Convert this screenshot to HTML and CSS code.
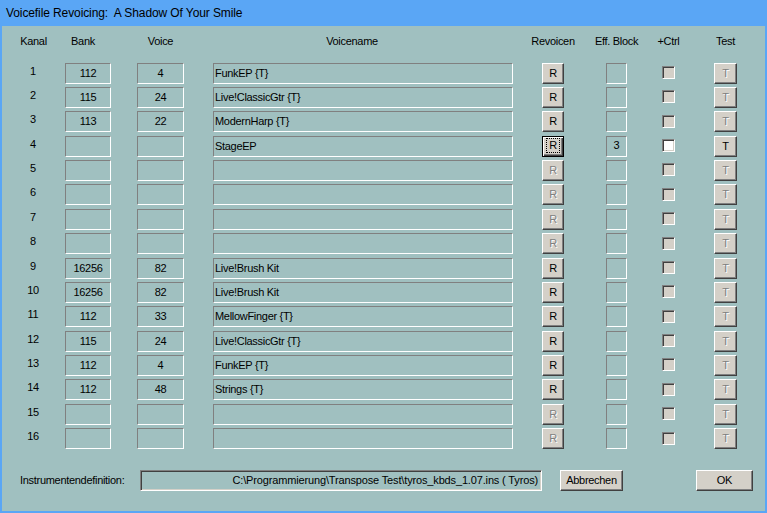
FILE: index.html
```html
<!DOCTYPE html>
<html lang="de">
<head>
<meta charset="utf-8">
<title>Voicefile Revoicing</title>
<link rel="stylesheet" href="styles.css">
</head>
<body>
<div class="window">
  <div class="titlebar">Voicefile Revoicing:&nbsp; A Shadow Of Your Smile</div>
  <div class="client">
    <div class="row head">
      <div class="h c-kanal">Kanal</div>
      <div class="h c-bank shift-bank">Bank</div>
      <div class="h c-voice">Voice</div>
      <div class="h c-name shift-name">Voicename</div>
      <div class="h c-rev">Revoicen</div>
      <div class="h c-eff">Eff. Block</div>
      <div class="h c-ctrl">+Ctrl</div>
      <div class="h c-test">Test</div>
    </div>
    <div class="rows">
      <div class="row"><div class="kanal c-kanal">1</div><div class="field num c-bank">112</div><div class="field num c-voice">4</div><div class="field name c-name">FunkEP {T}</div><div class="btn c-rev">R</div><div class="field eff c-eff"></div><div class="chk c-ctrl"></div><div class="btn dis c-test">T</div></div>
      <div class="row"><div class="kanal c-kanal">2</div><div class="field num c-bank">115</div><div class="field num c-voice">24</div><div class="field name c-name">Live!ClassicGtr {T}</div><div class="btn c-rev">R</div><div class="field eff c-eff"></div><div class="chk c-ctrl"></div><div class="btn dis c-test">T</div></div>
      <div class="row"><div class="kanal c-kanal">3</div><div class="field num c-bank">113</div><div class="field num c-voice">22</div><div class="field name c-name">ModernHarp {T}</div><div class="btn c-rev">R</div><div class="field eff c-eff"></div><div class="chk c-ctrl"></div><div class="btn dis c-test">T</div></div>
      <div class="row"><div class="kanal c-kanal">4</div><div class="field num c-bank"></div><div class="field num c-voice"></div><div class="field name c-name">StageEP</div><div class="btn def c-rev"><span class="focus">R</span></div><div class="field eff c-eff">3</div><div class="chk on c-ctrl"></div><div class="btn c-test">T</div></div>
      <div class="row"><div class="kanal c-kanal">5</div><div class="field num c-bank"></div><div class="field num c-voice"></div><div class="field name c-name"></div><div class="btn dis c-rev">R</div><div class="field eff c-eff"></div><div class="chk c-ctrl"></div><div class="btn dis c-test">T</div></div>
      <div class="row"><div class="kanal c-kanal">6</div><div class="field num c-bank"></div><div class="field num c-voice"></div><div class="field name c-name"></div><div class="btn dis c-rev">R</div><div class="field eff c-eff"></div><div class="chk c-ctrl"></div><div class="btn dis c-test">T</div></div>
      <div class="row"><div class="kanal c-kanal">7</div><div class="field num c-bank"></div><div class="field num c-voice"></div><div class="field name c-name"></div><div class="btn dis c-rev">R</div><div class="field eff c-eff"></div><div class="chk c-ctrl"></div><div class="btn dis c-test">T</div></div>
      <div class="row"><div class="kanal c-kanal">8</div><div class="field num c-bank"></div><div class="field num c-voice"></div><div class="field name c-name"></div><div class="btn dis c-rev">R</div><div class="field eff c-eff"></div><div class="chk c-ctrl"></div><div class="btn dis c-test">T</div></div>
      <div class="row"><div class="kanal c-kanal">9</div><div class="field num c-bank">16256</div><div class="field num c-voice">82</div><div class="field name c-name">Live!Brush Kit</div><div class="btn c-rev">R</div><div class="field eff c-eff"></div><div class="chk c-ctrl"></div><div class="btn dis c-test">T</div></div>
      <div class="row"><div class="kanal c-kanal">10</div><div class="field num c-bank">16256</div><div class="field num c-voice">82</div><div class="field name c-name">Live!Brush Kit</div><div class="btn c-rev">R</div><div class="field eff c-eff"></div><div class="chk c-ctrl"></div><div class="btn dis c-test">T</div></div>
      <div class="row"><div class="kanal c-kanal">11</div><div class="field num c-bank">112</div><div class="field num c-voice">33</div><div class="field name c-name">MellowFinger {T}</div><div class="btn c-rev">R</div><div class="field eff c-eff"></div><div class="chk c-ctrl"></div><div class="btn dis c-test">T</div></div>
      <div class="row"><div class="kanal c-kanal">12</div><div class="field num c-bank">115</div><div class="field num c-voice">24</div><div class="field name c-name">Live!ClassicGtr {T}</div><div class="btn c-rev">R</div><div class="field eff c-eff"></div><div class="chk c-ctrl"></div><div class="btn dis c-test">T</div></div>
      <div class="row"><div class="kanal c-kanal">13</div><div class="field num c-bank">112</div><div class="field num c-voice">4</div><div class="field name c-name">FunkEP {T}</div><div class="btn c-rev">R</div><div class="field eff c-eff"></div><div class="chk c-ctrl"></div><div class="btn dis c-test">T</div></div>
      <div class="row"><div class="kanal c-kanal">14</div><div class="field num c-bank">112</div><div class="field num c-voice">48</div><div class="field name c-name">Strings {T}</div><div class="btn c-rev">R</div><div class="field eff c-eff"></div><div class="chk c-ctrl"></div><div class="btn dis c-test">T</div></div>
      <div class="row"><div class="kanal c-kanal">15</div><div class="field num c-bank"></div><div class="field num c-voice"></div><div class="field name c-name"></div><div class="btn dis c-rev">R</div><div class="field eff c-eff"></div><div class="chk c-ctrl"></div><div class="btn dis c-test">T</div></div>
      <div class="row"><div class="kanal c-kanal">16</div><div class="field num c-bank"></div><div class="field num c-voice"></div><div class="field name c-name"></div><div class="btn dis c-rev">R</div><div class="field eff c-eff"></div><div class="chk c-ctrl"></div><div class="btn dis c-test">T</div></div>
    </div>
    <div class="footer">
      <div class="label">Instrumentendefinition:</div>
      <div class="path">C:\Programmierung\Transpose Test\tyros_kbds_1.07.ins ( Tyros)</div>
      <div class="btn wide cancel">Abbrechen</div>
      <div class="btn wide ok">OK</div>
    </div>
  </div>
</div>
</body>
</html>
```
FILE: styles.css
```css
html, body {
  margin: 0;
  padding: 0;
  background: #a0c0c0;
}

body {
  font-family: "Liberation Sans", Arial, sans-serif;
  font-size: 11px;
  letter-spacing: -0.3px;
  color: #000;
}

.window {
  width: 767px;
  height: 513px;
  display: flex;
  flex-direction: column;
  box-sizing: border-box;
}

.titlebar {
  height: 26px;
  line-height: 26px;
  padding-left: 6px;
  background: #5aa6f5;
  font-size: 12px;
  letter-spacing: -0.1px;
  white-space: nowrap;
  flex: none;
}

.client {
  flex: 1;
  background: #a0c0c0;
  border-left: 2px solid #5aa6f5;
  border-right: 2px solid #5aa6f5;
  border-bottom: 2px solid #5aa6f5;
  padding-top: 9px;
  box-sizing: border-box;
}

.row {
  display: grid;
  grid-template-columns: 63px 46px 26px 47px 29px 300px 29px 22px 42px 21px 35px 13px 39px 23px;
  height: 24.375px;
  align-items: start;
}

.row.head {
  height: 13px;
}

.rows {
  margin-top: 14.6px;
}

.c-kanal { grid-column: 1; }
.c-bank { grid-column: 2; }
.c-voice { grid-column: 4; }
.c-name { grid-column: 6; }
.c-rev { grid-column: 8; }
.c-eff { grid-column: 10; }
.c-ctrl { grid-column: 12; }
.c-test { grid-column: 14; }

.h {
  display: flex;
  justify-content: center;
  white-space: nowrap;
  line-height: 13px;
}

.shift-bank { padding-right: 10px; }
.shift-name { padding-right: 22px; }

.kanal {
  text-align: center;
  line-height: 13px;
  padding-top: 2px;
  padding-right: 1px;
}

.field {
  height: 21px;
  box-sizing: border-box;
  border-top: 1px solid #808080;
  border-left: 1px solid #808080;
  border-bottom: 1px solid #ffffff;
  border-right: 1px solid #ffffff;
  line-height: 19px;
  white-space: nowrap;
  overflow: hidden;
}

.num {
  text-align: center;
}

.name {
  padding-left: 1px;
}

.eff {
  text-align: center;
  line-height: 16px;
}

.btn {
  height: 21px;
  box-sizing: border-box;
  background: #d4d0c8;
  border-top: 1px solid #ffffff;
  border-left: 1px solid #ffffff;
  border-right: 1px solid #404040;
  border-bottom: 1px solid #404040;
  box-shadow: inset -1px -1px 0 #808080;
  text-align: center;
  line-height: 19px;
  white-space: nowrap;
}

.btn.dis {
  color: #808080;
  text-shadow: 1px 1px 0 #ffffff;
}

.btn.def {
  border: 1px solid #000000;
  box-shadow: inset 1px 1px 0 #ffffff, inset -1px -1px 0 #404040, inset -2px -2px 0 #808080;
  display: flex;
  align-items: center;
  justify-content: center;
}

.focus {
  display: block;
  outline: 1px dotted #000000;
  width: 12px;
  height: 13px;
  line-height: 13px;
  margin-top: -1px;
}

.chk {
  width: 13px;
  height: 13px;
  margin-top: 3.4px;
  box-sizing: border-box;
  background: #d4d0c8;
  border-top: 1px solid #808080;
  border-left: 1px solid #808080;
  border-bottom: 1px solid #ffffff;
  border-right: 1px solid #ffffff;
  box-shadow: inset 1px 1px 0 #404040, inset -1px -1px 0 #d4d0c8;
}

.chk.on {
  background: #ffffff;
}

.footer {
  display: flex;
  align-items: center;
  margin-top: 17.4px;
  padding-left: 18px;
  height: 21px;
}

.label {
  width: 120px;
  white-space: nowrap;
  line-height: 13px;
}

.path {
  width: 402px;
  height: 21px;
  box-sizing: border-box;
  border-top: 1px solid #808080;
  border-left: 1px solid #808080;
  border-bottom: 1px solid #ffffff;
  border-right: 1px solid #ffffff;
  box-shadow: inset 1px 1px 0 #404040, inset -1px -1px 0 #d4d0c8;
  text-align: right;
  padding-right: 3px;
  line-height: 19px;
  letter-spacing: -0.15px;
  white-space: nowrap;
  overflow: hidden;
}

.btn.wide {
  line-height: 19px;
}

.cancel {
  width: 63px;
  margin-left: 18px;
}

.ok {
  width: 57px;
  margin-left: 73px;
}
```
